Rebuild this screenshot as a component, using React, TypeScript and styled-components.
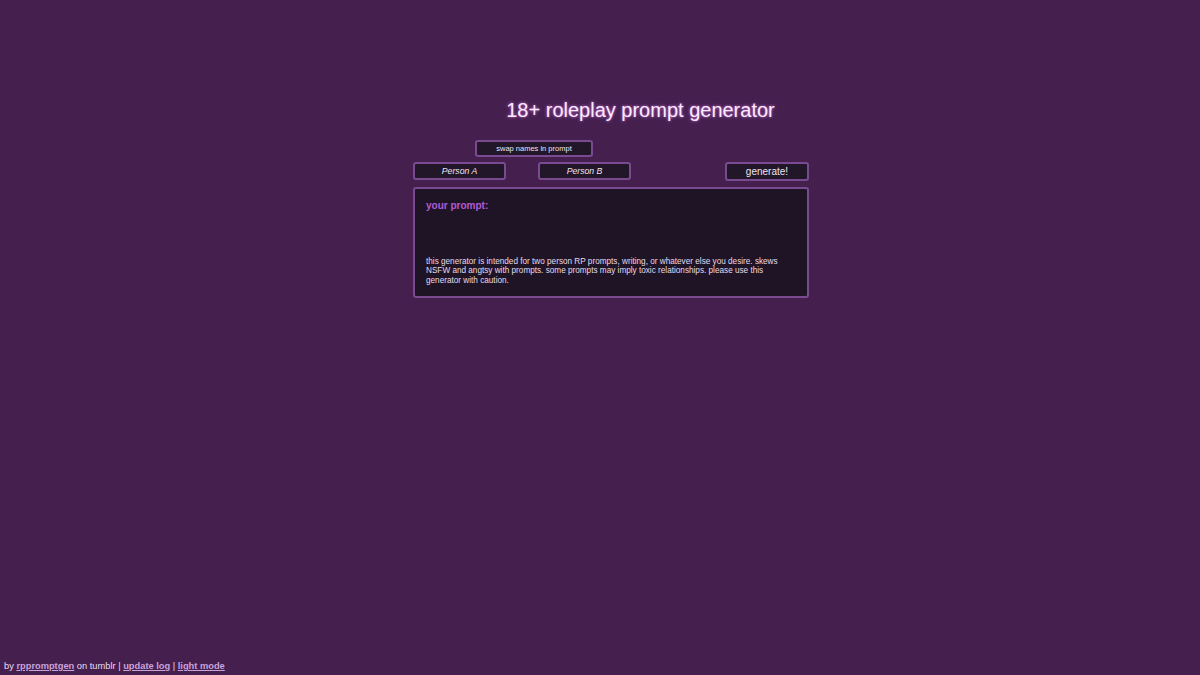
import styled, { createGlobalStyle } from "styled-components";

const GlobalStyle = createGlobalStyle`
	html, body {
		margin: 0;
		padding: 0;
		background: #45204f;
		font-family: "Liberation Sans", Arial, sans-serif;
	}
`;

const Page = styled.div`
	min-height: 100vh;
	display: flex;
	flex-direction: column;
	box-sizing: border-box;
`;

const Title = styled.h1`
	margin: 97px 0 0 81px;
	text-align: center;
	font-size: 20px;
	font-weight: normal;
	color: #fbeaff;
	text-shadow: 0 0 3px #d875e0;
	line-height: 26px;
`;

const Main = styled.div`
	width: 396px;
	margin: 17px 0 0 413px;
	display: flex;
	flex-direction: column;
`;

const Button = styled.button<{ $w: number; $h: number; $size: number; $italic?: boolean }>`
	box-sizing: border-box;
	width: ${(p) => p.$w}px;
	height: ${(p) => p.$h}px;
	padding: 0;
	background: #221629;
	border: 2px solid #7a4a90;
	border-radius: 3px;
	color: #eee4f0;
	font-family: "Liberation Sans", Arial, sans-serif;
	font-size: ${(p) => p.$size}px;
	font-style: ${(p) => (p.$italic ? "italic" : "normal")};
`;

const SwapRow = styled.div`
	display: flex;
	padding-left: 62px;
`;

const ControlRow = styled.div`
	display: flex;
	align-items: flex-start;
	gap: 32px;
	margin-top: 5px;
`;

const Spacer = styled.div`
	flex: 1;
`;

const PromptBox = styled.div`
	box-sizing: border-box;
	margin-top: 6px;
	height: 111px;
	padding: 10px 20px 11px 11px;
	background: #1f1426;
	border: 2px solid #7a4a90;
	border-radius: 3px;
	display: flex;
	flex-direction: column;
`;

const PromptLabel = styled.div`
	color: #b25ad6;
	font-weight: bold;
	font-size: 10px;
	line-height: 13px;
`;

const Notice = styled.p`
	margin: auto 0 0;
	color: #e6dbe8;
	font-size: 8.2px;
	line-height: 9.5px;
`;

const Footer = styled.div`
	margin-top: auto;
	padding: 0 0 2px 4px;
	color: #eadcf0;
	font-size: 9.3px;
	line-height: 13px;
`;

const FooterLink = styled.a`
	color: #c8a3dc;
	font-weight: bold;
	text-decoration: underline;
`;

export default function App(): JSX.Element {
	return (
		<Page>
			<GlobalStyle />
			<Title>18+ roleplay prompt generator</Title>
			<Main>
				<SwapRow>
					<Button $w={118} $h={17} $size={7.5}>
						swap names in prompt
					</Button>
				</SwapRow>
				<ControlRow>
					<Button $w={93} $h={18} $size={8.7} $italic>
						Person A
					</Button>
					<Button $w={93} $h={18} $size={8.7} $italic>
						Person B
					</Button>
					<Spacer />
					<Button $w={84} $h={19} $size={10}>
						generate!
					</Button>
				</ControlRow>
				<PromptBox>
					<PromptLabel>your prompt:</PromptLabel>
					<Notice>
						this generator is intended for two person RP prompts, writing, or whatever else you desire.
						skews NSFW and angtsy with prompts. some prompts may imply toxic relationships. please use
						this generator with caution.
					</Notice>
				</PromptBox>
			</Main>
			<Footer>
				by <FooterLink>rppromptgen</FooterLink> on tumblr | <FooterLink>update log</FooterLink> |{" "}
				<FooterLink>light mode</FooterLink>
			</Footer>
		</Page>
	);
}
